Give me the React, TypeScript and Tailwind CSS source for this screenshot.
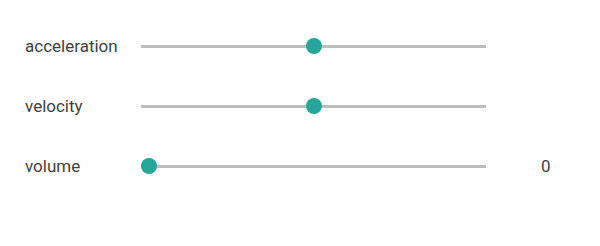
import React from "react";

type Row = { label: string; value: number; showValue?: boolean };

const rows: Row[] = [
  { label: "acceleration", value: 0.5 },
  { label: "velocity", value: 0.5 },
  { label: "volume", value: 0, showValue: true },
];

function Slider({ value }: { value: number }) {
  const trackWidth = 345;
  const thumb = 16;
  return (
    <div className="relative flex h-4 w-[345px] items-center">
      <div className="h-[3px] w-full bg-[#bdbdbd]" />
      <div
        className="absolute top-0 h-4 w-4 rounded-full bg-[#26a69a]"
        style={{ left: value * (trackWidth - thumb) }}
      />
    </div>
  );
}

export default function App() {
  return (
    <div
      className="h-[246px] w-[600px] bg-white pl-[25px] pt-4 text-[17px] text-[#3f3f3f]"
      style={{ fontFamily: "Roboto, 'Noto Sans', sans-serif" }}
    >
      {rows.map((r) => (
        <div key={r.label} className="flex h-[60px] items-center">
          <div className="w-[116px] pt-[1px]">{r.label}</div>
          <Slider value={r.value} />
          {r.showValue && <div className="ml-[55px] pt-[1px]">0</div>}
        </div>
      ))}
    </div>
  );
}
